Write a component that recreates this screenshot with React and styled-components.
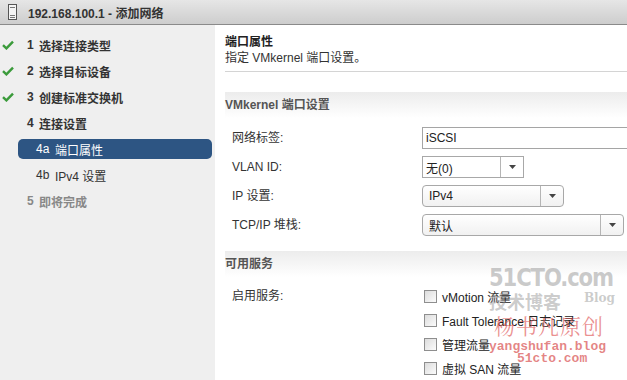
import React from 'react';
import styled, { createGlobalStyle } from 'styled-components';

const GlobalStyle = createGlobalStyle`
  html, body {
    margin: 0;
    padding: 0;
    background: #fff;
  }
  body {
    font-family: "Liberation Sans", Arial, "Noto Sans CJK SC", sans-serif;
    font-size: 12px;
    color: #333;
  }
`;

const Window = styled.div`
  position: relative;
  width: 627px;
  height: 380px;
  overflow: hidden;
  display: flex;
  flex-direction: column;
`;

const TitleBar = styled.div`
  height: 24px;
  flex-shrink: 0;
  display: flex;
  align-items: center;
  padding-left: 8px;
  gap: 11px;
  background: linear-gradient(to bottom, #e6e6e6, #cdcdcd);
  border-bottom: 1px solid #8a8a8a;
  font-size: 12px;
  font-weight: bold;
  color: #333;
`;

const Body = styled.div`
  flex: 1;
  display: flex;
  min-height: 0;
`;

const Sidebar = styled.div`
  width: 215px;
  flex-shrink: 0;
  display: flex;
  flex-direction: column;
  background: #efefef;
  padding-top: 7px;
`;

const Step = styled.div`
  height: 26px;
  display: flex;
  align-items: center;
  font-weight: bold;
  font-size: 12px;
  color: ${p => (p.$muted ? '#888' : '#333')};
`;

const CheckSlot = styled.span`
  width: 27px;
  padding-left: 2px;
  box-sizing: border-box;
  display: flex;
  align-items: center;
`;

const StepNum = styled.span`
  width: 12px;
`;

const SubStep = styled.div`
  height: 20px;
  margin: 3px 3px 3px 18px;
  padding-left: 18px;
  border-radius: 5px;
  display: flex;
  align-items: center;
  font-size: 12px;
  background: ${p => (p.$active ? '#2d5583' : 'transparent')};
  color: ${p => (p.$active ? '#fff' : '#333')};
`;

const SubNum = styled.span`
  width: 19px;
`;

const Main = styled.div`
  flex: 1;
  min-width: 0;
  padding: 9px 0 0 10px;
`;

const PageHead = styled.div`
  padding-bottom: 5px;
  border-bottom: 1px solid #d4d4d4;
  line-height: 16px;
`;

const PageTitle = styled.div`
  font-weight: bold;
  color: #222;
`;

const PageSub = styled.div`
  color: #333;
`;

const SectionBand = styled.div`
  margin-top: ${p => p.$top}px;
  height: 26px;
  padding-top: 5px;
  box-sizing: border-box;
  line-height: 16px;
  font-weight: bold;
  color: #555;
  background: linear-gradient(to bottom, #ececec, #ffffff);
`;

const Form = styled.div`
  display: grid;
  grid-template-columns: 190px 1fr;
  row-gap: ${p => p.$gap}px;
  padding: ${p => p.$pad}px 0 0 7px;
  align-items: center;
`;

const Label = styled.div`
  height: ${p => p.$h}px;
  line-height: ${p => p.$h}px;
  align-self: start;
  color: #333;
`;

const TextInput = styled.div`
  height: 22px;
  width: 230px;
  box-sizing: border-box;
  border: 1px solid #a5a5a5;
  border-right: none;
  padding-left: 3px;
  line-height: 20px;
  color: #222;
`;

const Select = styled.div`
  height: ${p => p.$h}px;
  width: ${p => p.$w}px;
  box-sizing: border-box;
  border: 1px solid #a8a8a8;
  border-radius: ${p => (p.$round ? 4 : 0)}px;
  display: flex;
  align-items: stretch;
  background: ${p => (p.$round ? 'linear-gradient(to bottom, #ffffff, #f1f1f1)' : '#fff')};
`;

const SelectValue = styled.div`
  flex: 1;
  padding-left: ${p => (p.$round ? 6 : 3)}px;
  display: flex;
  align-items: center;
  color: #222;
`;

const SelectButton = styled.div`
  width: 22px;
  border-left: 1px solid #b5b5b5;
  display: flex;
  align-items: center;
  justify-content: center;
`;

const CheckRow = styled.div`
  height: 24px;
  display: flex;
  align-items: center;
  gap: 5px;
  margin-left: 2px;
  color: #222;
`;

const CheckBox = styled.span`
  width: 13px;
  height: 13px;
  box-sizing: border-box;
  border: 1px solid #8e8e8e;
  background: linear-gradient(135deg, #dcdcdc, #fbfbfb);
`;

const Watermark = styled.div`
  position: absolute;
  left: 489px;
  top: 266px;
  width: 126px;
  pointer-events: none;
  line-height: 1;
  white-space: nowrap;
`;

const WmLogo = styled.div`
  font-family: "DejaVu Sans Condensed", "DejaVu Sans", sans-serif;
  font-weight: bold;
  font-size: 21px;
  letter-spacing: -1px;
  height: 24px;
  transform: scale(1.12, 1.2);
  transform-origin: left top;
  color: rgba(150, 150, 150, 0.5);
`;

const WmLine = styled.div`
  display: flex;
  justify-content: space-between;
  align-items: flex-end;
  color: rgba(140, 140, 140, 0.45);
  font-weight: bold;
  height: 20px;
`;

const WmBlogCn = styled.span`
  font-size: 18px;
  font-family: "Noto Sans CJK SC", sans-serif;
`;

const WmBlog = styled.span`
  font-size: 12px;
  font-family: "DejaVu Serif", serif;
  padding-bottom: 6px;
`;

const WmAuthor = styled.div`
  font-family: "Noto Serif CJK SC", "Noto Sans CJK SC", serif;
  font-size: 21px;
  height: 30px;
  padding-top: 5px;
  box-sizing: border-box;
  color: rgba(220, 70, 70, 0.6);
  padding-left: 5px;
  letter-spacing: 1px;
`;

const WmUrl = styled.div`
  font-family: "Liberation Mono", monospace;
  font-weight: bold;
  font-size: 13px;
  height: 12px;
  color: rgba(210, 50, 50, 0.6);
  padding-left: ${p => p.$pl}px;
`;

const GreenCheck = () => (
  <svg width="12" height="10" viewBox="0 0 12 10">
    <path d="M1 5.2 L4.4 8.4 L11 1.6" fill="none" stroke="#3b9b3b" strokeWidth="2.4" />
  </svg>
);

const Caret = () => (
  <svg width="7" height="4" viewBox="0 0 7 4">
    <path d="M0 0 H7 L3.5 4 Z" fill="#444" />
  </svg>
);

const ServerIcon = () => (
  <svg width="9" height="16" viewBox="0 0 9 16">
    <rect x="0.5" y="0.5" width="8" height="15" fill="#f4f4f4" stroke="#555" />
    <path d="M2 3.5 H7 M2 11.5 H7 M2 13.5 H7" stroke="#777" />
  </svg>
);

const steps = [
  { n: '1', text: '选择连接类型', done: true },
  { n: '2', text: '选择目标设备', done: true },
  { n: '3', text: '创建标准交换机', done: true },
  { n: '4', text: '连接设置' },
];

const services = ['vMotion 流量', 'Fault Tolerance 日志记录', '管理流量', '虚拟 SAN 流量'];

const App = () => (
  <Window>
    <GlobalStyle />
    <TitleBar>
      <ServerIcon />
      <span>192.168.100.1 - 添加网络</span>
    </TitleBar>
    <Body>
      <Sidebar>
        {steps.map(s => (
          <Step key={s.n}>
            <CheckSlot>{s.done && <GreenCheck />}</CheckSlot>
            <StepNum>{s.n}</StepNum>
            {s.text}
          </Step>
        ))}
        <SubStep $active>
          <SubNum>4a</SubNum>端口属性
        </SubStep>
        <SubStep>
          <SubNum>4b</SubNum>IPv4 设置
        </SubStep>
        <Step $muted>
          <CheckSlot />
          <StepNum>5</StepNum>
          即将完成
        </Step>
      </Sidebar>
      <Main>
        <PageHead>
          <PageTitle>端口属性</PageTitle>
          <PageSub>指定 VMkernel 端口设置。</PageSub>
        </PageHead>
        <SectionBand $top={20}>VMkernel 端口设置</SectionBand>
        <Form $gap={7} $pad={9}>
          <Label $h={22}>网络标签:</Label>
          <TextInput>iSCSI</TextInput>
          <Label $h={22}>VLAN ID:</Label>
          <Select $w={102} $h={22}>
            <SelectValue>无(0)</SelectValue>
            <SelectButton><Caret /></SelectButton>
          </Select>
          <Label $h={22}>IP 设置:</Label>
          <Select $w={142} $h={22} $round>
            <SelectValue $round>IPv4</SelectValue>
            <SelectButton><Caret /></SelectButton>
          </Select>
          <Label $h={22}>TCP/IP 堆栈:</Label>
          <Select $w={202} $h={22} $round>
            <SelectValue $round>默认</SelectValue>
            <SelectButton><Caret /></SelectButton>
          </Select>
        </Form>
        <SectionBand $top={15}>可用服务</SectionBand>
        <Form $gap={0} $pad={7}>
          <Label $h={24}>启用服务:</Label>
          <div>
            {services.map(s => (
              <CheckRow key={s}>
                <CheckBox />
                {s}
              </CheckRow>
            ))}
          </div>
        </Form>
      </Main>
    </Body>
    <Watermark>
      <WmLogo>51CTO.com</WmLogo>
      <WmLine>
        <WmBlogCn>技术博客</WmBlogCn>
        <WmBlog>Blog</WmBlog>
      </WmLine>
      <WmAuthor>杨书凡原创</WmAuthor>
      <WmUrl $pl={0}>yangshufan.blog</WmUrl>
      <WmUrl $pl={28}>51cto.com</WmUrl>
    </Watermark>
  </Window>
);

export default App;
